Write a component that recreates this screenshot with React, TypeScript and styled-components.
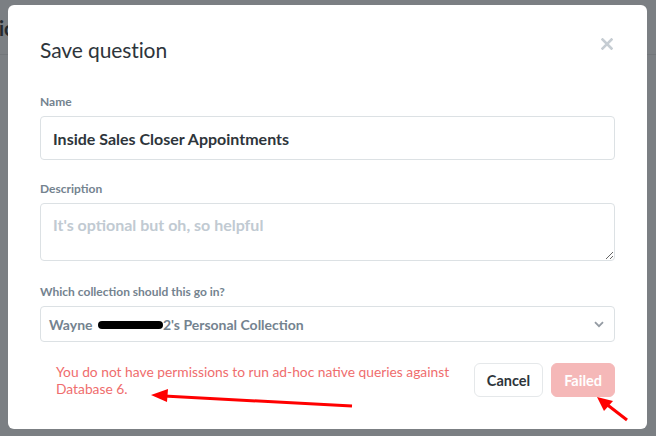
import React from 'react';
import styled, { createGlobalStyle } from 'styled-components';

const GlobalStyle = createGlobalStyle`
    html, body {
        margin: 0;
        padding: 0;
        width: 656px;
        height: 436px;
        overflow: hidden;
        background: #7b7f83;
        font-family: Lato, "Noto Sans", sans-serif;
    }
`;

const Page = styled.div`
    position: relative;
    width: 656px;
    height: 436px;
`;

const AppHeader = styled.header`
    height: 55px;
    border-bottom: 1px solid #72767a;
    box-sizing: border-box;
    padding-top: 16px;
    font-size: 20px;
    font-weight: 700;
    color: #25292d;
    text-indent: -1px;
`;

const Modal = styled.div`
    position: absolute;
    top: 5px;
    left: 8px;
    width: 639px;
    height: 424px;
    box-sizing: border-box;
    background: #fff;
    border-radius: 6px;
    padding: 32px;
    display: flex;
    flex-direction: column;
`;

const ModalHeader = styled.div`
    display: flex;
    justify-content: space-between;
    align-items: flex-start;
    margin-bottom: 31px;
`;

const Title = styled.h2`
    margin: 0;
    font-size: 21px;
    line-height: 26px;
    font-weight: 400;
    color: #2e353b;
    letter-spacing: -0.1px;
`;

const CloseButton = styled.button`
    border: 0;
    background: none;
    padding: 0;
    margin: 1px 2px 0 0;
    width: 12px;
    height: 12px;
    display: flex;
    cursor: pointer;
`;

const Field = styled.div<{ $gap?: number }>`
    margin-bottom: ${(p) => p.$gap ?? 21}px;
`;

const Label = styled.label`
    display: block;
    font-size: 12px;
    line-height: 16px;
    font-weight: 700;
    color: #74838f;
    margin-bottom: 6px;
`;

const fieldBase = `
    display: block;
    width: 100%;
    box-sizing: border-box;
    border: 1px solid #dce1e4;
    border-radius: 4px;
    font-family: Lato, "Noto Sans", sans-serif;
    font-weight: 700;
    outline: none;
    background: #fff;
`;

const TextInput = styled.input`
    ${fieldBase}
    height: 44px;
    padding: 0 12px;
    font-size: 16px;
    color: #2e353b;
`;

const TextArea = styled.textarea`
    ${fieldBase}
    height: 58px;
    padding: 11px 12px;
    font-size: 16px;
    line-height: 20px;
    color: #2e353b;
    resize: vertical;
    &::placeholder {
        color: #c1cad2;
    }
`;

const Select = styled.div`
    ${fieldBase}
    height: 36px;
    padding: 0 10px 0 8px;
    font-size: 14px;
    display: flex;
    align-items: center;
    justify-content: space-between;
    color: #74838f;
`;

const Redacted = styled.span`
    display: inline-block;
    width: 65px;
    height: 8px;
    background: #000;
    border-radius: 4px;
    vertical-align: 1px;
    margin-left: 2px;
`;

const Footer = styled.div`
    display: flex;
    align-items: center;
    margin-top: auto;
`;

const ErrorText = styled.div`
    flex: 1;
    margin: 0 16px;
    font-size: 13.8px;
    line-height: 17px;
    color: #ef6d6d;
`;

const Button = styled.button<{ $failed?: boolean }>`
    height: 34px;
    box-sizing: border-box;
    padding: 0 12px;
    border-radius: 6px;
    font-family: Lato, "Noto Sans", sans-serif;
    font-size: 14.5px;
    font-weight: 700;
    border: 1px solid ${(p) => (p.$failed ? '#f5b8b8' : '#e5e8ea')};
    background: ${(p) => (p.$failed ? '#f5b8b8' : '#fff')};
    color: ${(p) => (p.$failed ? '#fff' : '#2e353b')};
    & + & {
        margin-left: 8px;
    }
`;

const Annotation = styled.svg`
    position: absolute;
    top: 0;
    left: 0;
    pointer-events: none;
`;

export default function App() {
    return (
        <Page>
            <GlobalStyle />
            <AppHeader>ic</AppHeader>
            <Modal>
                <ModalHeader>
                    <Title>Save question</Title>
                    <CloseButton aria-label="Close">
                        <svg width="12" height="12" viewBox="0 0 12 12">
                            <path d="M1.5 1.5 L10.5 10.5 M10.5 1.5 L1.5 10.5" stroke="#c6cdd3" strokeWidth="2.6" strokeLinecap="square" />
                        </svg>
                    </CloseButton>
                </ModalHeader>
                <Field>
                    <Label>Name</Label>
                    <TextInput defaultValue="Inside Sales Closer Appointments" />
                </Field>
                <Field $gap={23}>
                    <Label>Description</Label>
                    <TextArea placeholder="It's optional but oh, so helpful" />
                </Field>
                <Field $gap={0}>
                    <Label>Which collection should this go in?</Label>
                    <Select>
                        <span>
                            Wayne <Redacted />2's Personal Collection
                        </span>
                        <svg width="10" height="7" viewBox="0 0 10 7">
                            <path d="M1 1.2 L5 5.2 L9 1.2" fill="none" stroke="#949ba3" strokeWidth="1.8" />
                        </svg>
                    </Select>
                </Field>
                <Footer>
                    <ErrorText>You do not have permissions to run ad-hoc native queries against Database 6.</ErrorText>
                    <Button>Cancel</Button>
                    <Button $failed>Failed</Button>
                </Footer>
            </Modal>
            <Annotation width="656" height="436" viewBox="0 0 656 436">
                <line x1="352" y1="406" x2="164" y2="396" stroke="#ff0000" strokeWidth="3" />
                <polygon points="151,395 168,389 167,402" fill="#ff0000" />
                <line x1="627" y1="420" x2="605" y2="403" stroke="#ff0000" strokeWidth="3" />
                <polygon points="597,397 613,401 604,411" fill="#ff0000" />
            </Annotation>
        </Page>
    );
}
